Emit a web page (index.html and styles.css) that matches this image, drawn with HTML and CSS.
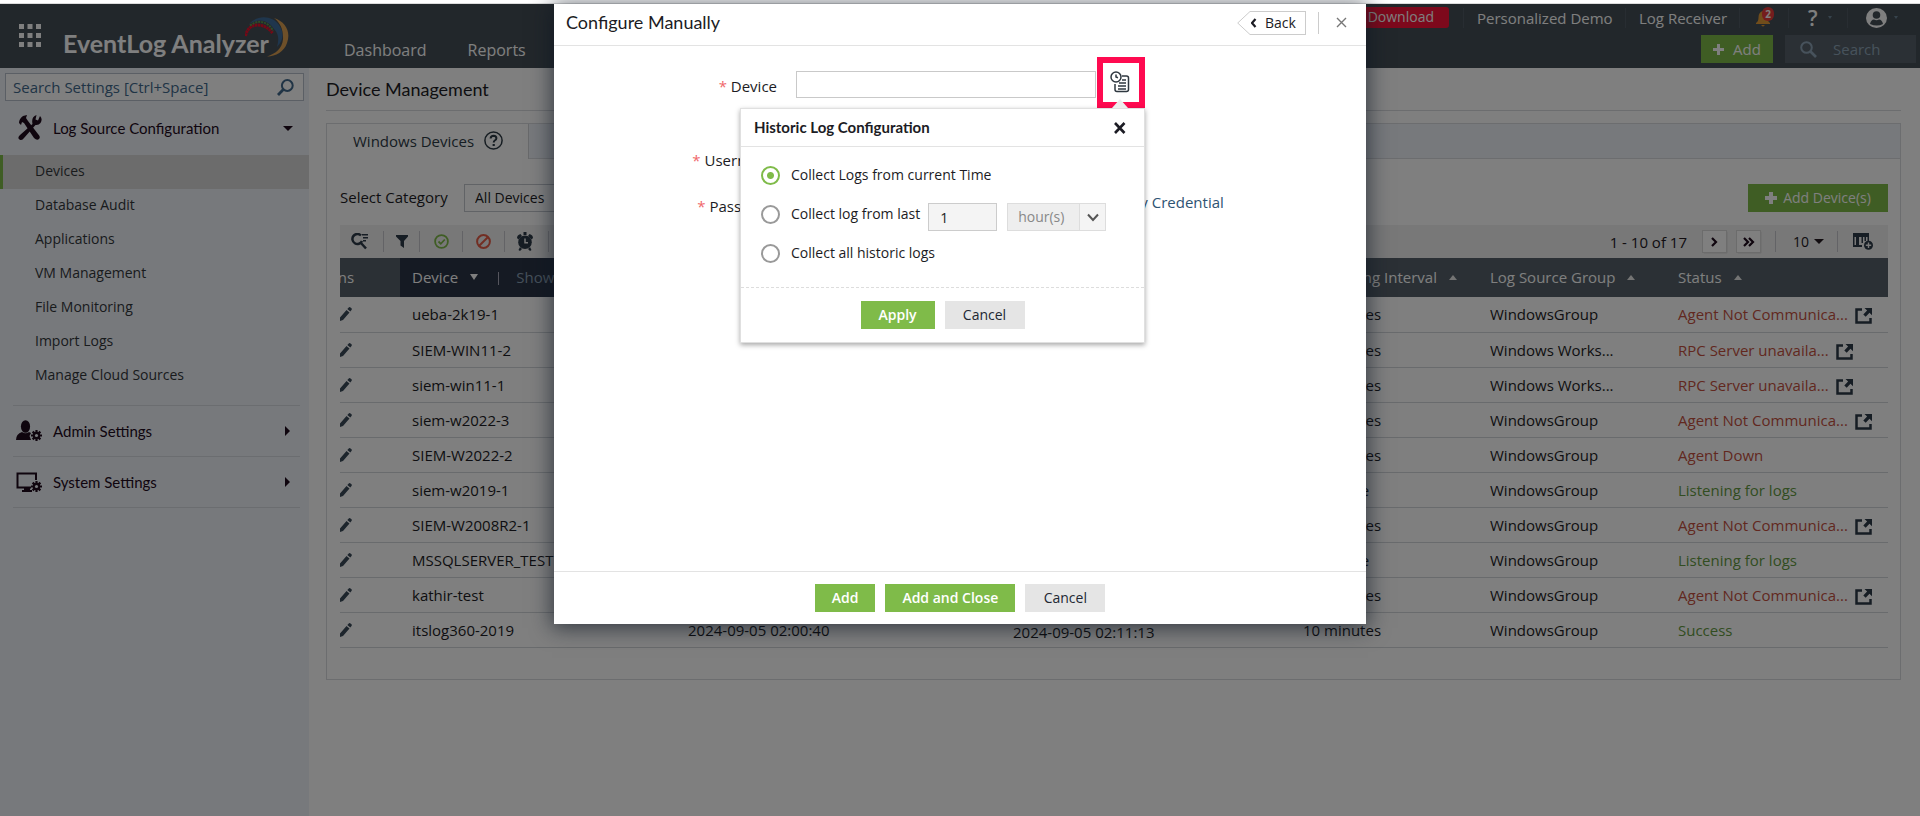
FILE: index.html
```html
<!DOCTYPE html>
<html lang="en">
<head>
<meta charset="utf-8">
<title>EventLog Analyzer</title>
<link rel="stylesheet" href="styles.css">
</head>
<body>
<svg class="sprite" aria-hidden="true">
  <symbol id="i-pencil" viewBox="0 0 12 14"><path d="M0 10.500 6.500 3l3 2.500L3 13l-3 1zM7.300 2 9 .300q.8-.5 1.500.1l1 .9q.7.8 0 1.600L10.300 4.500z"/></symbol>
  <symbol id="i-ext" viewBox="0 0 17 16"><path d="M7 1.500H1.500v13h14V10" fill="none" stroke="currentColor" stroke-width="2.500"/><path d="M9.500 0H17v7.200l-2.500-2.400-3.800 3.900-2.400-2.300 3.800-3.900z"/></symbol>
  <symbol id="i-gear" viewBox="0 0 12 12"><g stroke="currentColor" stroke-width="2.400"><path d="M6 0v12M0 6h12M1.800 1.800l8.400 8.400M10.200 1.800l-8.400 8.400"/></g><circle cx="6" cy="6" r="4"/><circle cx="6" cy="6" r="1.700" class="hole"/></symbol>
</svg>

<div class="app">
  <header class="topbar">
    <button class="apps" aria-label="Apps"><svg width="22" height="24" viewBox="0 0 22 24"><path d="M0 0h5v5H0zM8.500 0h5v5h-5zM17 0h5v5h-5zM0 9h5v5H0zM8.500 9h5v5h-5zM17 9h5v5h-5zM0 18h5v5H0zM8.500 18h5v5h-5zM17 18h5v5h-5z"/></svg></button>
    <div class="brand">EventLog Analyzer
      <svg class="arc" width="44" height="42" viewBox="0 0 44 42" fill="none">
        <path d="M0.500 20Q3 9 13 9q9 .5 14.500 8" stroke="#e8102c" stroke-width="3" stroke-dasharray="2.500 .5"/>
        <path d="M5 9.500Q14 3 22 8q4 2.500 6 7" stroke="#5d9a4d" stroke-width="2" stroke-dasharray="2 1"/>
        <path d="M4 8C13-2 28 0 34 9c5 7 5 15-2 22 2-7 2-13-3-18C23 4 14 2 4 8z" fill="#3f6c9a"/>
        <path d="M29 2c12 4 17 14 13 25-3 9-11 13-20 13.500 9-3 15-8 16-17C38.500 15 36 7 29 2z" fill="#dda052"/>
      </svg>
    </div>
    <nav class="mainnav"><a href="#">Dashboard</a><a href="#">Reports</a></nav>
    <div class="topright">
      <div class="links">
        <a class="download" href="#">Download</a>
        <a class="cell demo" href="#">Personalized Demo</a>
        <a class="cell receiver" href="#">Log Receiver</a>
        <button class="cell bell" aria-label="Alerts"><svg width="18" height="19" viewBox="0 0 18 19"><path d="M1 15q2.500-1.500 2.500-5.500Q3.500 4 8 3q4.500 1 4.500 6.500 0 4 2.500 5.500v1H1zM6 17h4l-2 1.800z" fill="#e39a36"/></svg><span class="badge">2</span></button>
        <button class="cell help" aria-label="Help">?<i class="tiny"></i></button>
        <button class="cell user" aria-label="Account"><svg width="21" height="20" viewBox="0 0 21 20"><ellipse cx="10.500" cy="10" rx="10.500" ry="10" fill="#fff"/><circle cx="10.500" cy="7" r="3.800" fill="#454f57"/><path d="M4 16q1-4.500 4-4.500 2.500 1.500 5 0 3 0 4 4.500-6 3-13 0z" fill="#454f57"/></svg><i class="tiny"></i></button>
      </div>
      <div class="actions">
        <button class="btn green"><svg width="11" height="11" viewBox="0 0 11 11"><path d="M4 0h3v4h4v3H7v4H4V7H0V4h4z"/></svg>Add</button>
        <label class="topsearch"><svg width="17" height="17" viewBox="0 0 17 17" fill="none" stroke="currentColor"><circle cx="6.500" cy="6.500" r="5.300" stroke-width="2"/><path d="m10.500 10.500 5.500 5.500" stroke-width="2.600"/></svg><input type="text" placeholder="Search" aria-label="Search"></label>
      </div>
    </div>
  </header>

  <div class="cols">
    <aside class="side">
      <label class="sidesearch"><input type="text" placeholder="Search Settings [Ctrl+Space]" aria-label="Search Settings"><svg width="17" height="17" viewBox="0 0 17 17" fill="none" stroke="currentColor"><circle cx="10.300" cy="6.500" r="5.400" stroke-width="2"/><path d="M6.300 10.500 1 16" stroke-width="2.800"/></svg></label>
      <button class="group first">
        <svg width="24" height="26" viewBox="0 0 24 26"><path d="M1 8q0-4 4-7l4-1-1 3 2 3 10 13q3 3 1 5t-5-1L6 8 4 7 3 10z"/><path d="M22 1q3 3 .500 7-2 2.500-5 2L6 23q-2 3-4.500 1.500T2 20L14.500 9Q13 2 18.500 0l-1 4.500 2.500 1z"/></svg>
        <span>Log Source Configuration</span><i class="caret down"></i>
      </button>
      <nav class="items">
        <a class="on" href="#">Devices</a><a href="#">Database Audit</a><a href="#">Applications</a><a href="#">VM Management</a><a href="#">File Monitoring</a><a href="#">Import Logs</a><a href="#">Manage Cloud Sources</a>
      </nav>
      <button class="group">
        <svg width="26" height="22" viewBox="0 0 26 22"><ellipse cx="9.500" cy="6.500" rx="4.600" ry="6.300"/><path d="M0 20q0-6 6-8 3.500 2.500 7 0l2 1-1.500 3 1.500 4z"/><use href="#i-gear" x="15" y="10" width="11" height="11"/></svg>
        <span>Admin Settings</span><i class="caret right"></i>
      </button>
      <button class="group">
        <svg width="26" height="20" viewBox="0 0 26 20"><path d="M15 15.500H1.500V1.500h18.500V8" fill="none" stroke="currentColor" stroke-width="2"/><path d="M8 16h6v2h2v2H6v-2h2z"/><use href="#i-gear" x="15" y="9" width="11" height="11"/></svg>
        <span>System Settings</span><i class="caret right"></i>
      </button>
    </aside>

    <main class="main">
      <h1>Device Management</h1>
      <section class="panel">
        <div class="tabs"><button class="tab">Windows Devices <svg width="19" height="19" viewBox="0 0 19 19"><circle cx="9.500" cy="9.500" r="8.600" fill="none" stroke="currentColor" stroke-width="1.500"/><path d="M6.600 7.500q.2-2.700 3-2.700 2.800.1 2.800 2.500 0 1.300-1.600 2.200-1.100.7-1.100 2" fill="none" stroke="currentColor" stroke-width="2"/><path d="M8.600 13h2.200v2H8.600z"/></svg></button></div>
        <div class="inner">
          <div class="filter">
            <label for="cat">Select Category</label>
            <select id="cat"><option>All Devices</option></select>
            <button class="btn green adddev"><svg width="12" height="12" viewBox="0 0 12 12"><path d="M4 0h4v4h4v4H8v4H4V8H0V4h4z"/></svg>Add Device(s)</button>
          </div>
          <div class="toolbar">
            <button class="tool t1" aria-label="Search"><svg width="17" height="17" viewBox="0 0 17 17"><path d="M10 2.500A5 5 0 1 0 11 8M9.500 9.500l5.500 6" fill="none" stroke="currentColor" stroke-width="2.500"/><path d="M11 1h6v1.500h-6zM12 4h5v1.500h-5zM12 7h3v1.500h-3z"/></svg></button>
            <button class="tool t2" aria-label="Filter"><svg width="12" height="13" viewBox="0 0 12 13"><path d="M0 0h12v1.500L8 6v7L4.500 10.500V6L0 1.500z"/></svg></button>
            <button class="tool t3 ok" aria-label="Enable"><svg width="15" height="15" viewBox="0 0 15 15" fill="none" stroke="currentColor" stroke-width="1.800"><circle cx="7.500" cy="7.500" r="6.400"/><path d="m4.500 7.500 2.300 2.300 4-4.300"/></svg></button>
            <button class="tool t4 no" aria-label="Disable"><svg width="15" height="15" viewBox="0 0 15 15" fill="none" stroke="currentColor" stroke-width="2"><circle cx="7.500" cy="7.500" r="6.400"/><path d="m3.200 11.800 8.600-8.600"/></svg></button>
            <button class="tool t5" aria-label="Schedule"><svg width="16" height="19" viewBox="0 0 16 19"><path d="M0 6q0-3 3.500-4L5 4 1.500 7.500zM16 6q0-3-3.500-4L11 4l3.500 3.500zM6.500 0h3v3h-3zM3 15l2 2-2 2-1.500-1zM13 15l-2 2 2 2 1.500-1z"/><circle cx="8" cy="10.300" r="6.800"/><path d="M8 6.500v4.300h3" fill="none" stroke="#f0f0f0" stroke-width="1.500"/></svg></button>
            <span class="range">1 - 10 of 17</span>
            <button class="pg" aria-label="Next"><svg width="7" height="10" viewBox="0 0 7 10"><path d="m1 1 4 4-4 4" fill="none" stroke="currentColor" stroke-width="2.200"/></svg></button>
            <button class="pg" aria-label="Last"><svg width="12" height="10" viewBox="0 0 12 10"><path d="m1 1 4 4-4 4M6 1l4 4-4 4" fill="none" stroke="currentColor" stroke-width="2.200"/></svg></button>
            <button class="size">10<i class="caret down"></i></button>
            <button class="colpick" aria-label="Columns"><svg width="20" height="17" viewBox="0 0 20 17"><path d="M0 0h16v8h-1.500V4H13v4h-1.500V4H10v6H8.500V4H6v8h3v2H0zM1.500 4v8H3V4z"/><circle cx="15.500" cy="12.200" r="4.500"/><path d="M15.500 9.500v5.400M12.800 12.200h5.400" stroke="#f0f0f0" stroke-width="1.400"/></svg></button>
          </div>
          <table class="grid">
            <colgroup><col class="c1"><col class="c2"><col class="c3"><col class="c4"><col class="c5"><col class="c6"><col></colgroup>
            <thead><tr><th class="act"><span>Actions</span></th><th class="sorted">Device<i class="tri dn"></i><span class="bar"></span><span class="show">Show</span></th><th></th><th></th><th>Monitoring Interval<i class="tri"></i></th><th>Log Source Group<i class="tri"></i></th><th>Status<i class="tri"></i></th></tr></thead>
            <tbody>
              <tr><td><svg class="pen"><use href="#i-pencil"/></svg></td><td>ueba-2k19-1</td><td></td><td></td><td>10 minutes</td><td>WindowsGroup</td><td class="bad">Agent Not Communica...<svg class="ext"><use href="#i-ext"/></svg></td></tr>
              <tr><td><svg class="pen"><use href="#i-pencil"/></svg></td><td>SIEM-WIN11-2</td><td></td><td></td><td>10 minutes</td><td>Windows Works...</td><td class="bad">RPC Server unavaila...<svg class="ext"><use href="#i-ext"/></svg></td></tr>
              <tr><td><svg class="pen"><use href="#i-pencil"/></svg></td><td>siem-win11-1</td><td></td><td></td><td>10 minutes</td><td>Windows Works...</td><td class="bad">RPC Server unavaila...<svg class="ext"><use href="#i-ext"/></svg></td></tr>
              <tr><td><svg class="pen"><use href="#i-pencil"/></svg></td><td>siem-w2022-3</td><td></td><td></td><td>10 minutes</td><td>WindowsGroup</td><td class="bad">Agent Not Communica...<svg class="ext"><use href="#i-ext"/></svg></td></tr>
              <tr><td><svg class="pen"><use href="#i-pencil"/></svg></td><td>SIEM-W2022-2</td><td></td><td></td><td>10 minutes</td><td>WindowsGroup</td><td class="bad">Agent Down</td></tr>
              <tr><td><svg class="pen"><use href="#i-pencil"/></svg></td><td>siem-w2019-1</td><td></td><td></td><td>Real-time</td><td>WindowsGroup</td><td class="good">Listening for logs</td></tr>
              <tr><td><svg class="pen"><use href="#i-pencil"/></svg></td><td>SIEM-W2008R2-1</td><td></td><td></td><td>10 minutes</td><td>WindowsGroup</td><td class="bad">Agent Not Communica...<svg class="ext"><use href="#i-ext"/></svg></td></tr>
              <tr><td><svg class="pen"><use href="#i-pencil"/></svg></td><td>MSSQLSERVER_TEST</td><td></td><td></td><td>Real-time</td><td>WindowsGroup</td><td class="good">Listening for logs</td></tr>
              <tr><td><svg class="pen"><use href="#i-pencil"/></svg></td><td>kathir-test</td><td></td><td></td><td>10 minutes</td><td>WindowsGroup</td><td class="bad">Agent Not Communica...<svg class="ext"><use href="#i-ext"/></svg></td></tr>
              <tr><td><svg class="pen"><use href="#i-pencil"/></svg></td><td>itslog360-2019</td><td>2024-09-05 02:00:40</td><td class="low">2024-09-05 02:11:13</td><td>10 minutes</td><td>WindowsGroup</td><td class="good">Success</td></tr>
            </tbody>
          </table>
        </div>
      </section>
    </main>
  </div>

  <div class="overlay">
    <div class="modal" role="dialog" aria-labelledby="mt">
      <div class="mhead">
        <h2 id="mt">Configure Manually</h2>
        <button class="back"><svg class="tip" width="14" height="24" viewBox="0 0 14 24"><path d="M14 .500h-1L.700 12 13 23.500h1" fill="#fff" stroke="#ccc"/></svg><svg width="7" height="10" viewBox="0 0 7 10"><path d="M5.500 1 2 5l3.500 4" fill="none" stroke="currentColor" stroke-width="2.200"/></svg>Back</button>
        <button class="mx" aria-label="Close"><svg width="11" height="11" viewBox="0 0 11 11"><path d="m1 1 9 9m0-9-9 9" stroke="currentColor" stroke-width="1.400"/></svg></button>
      </div>
      <div class="mbody">
        <div class="frow">
          <label for="dev"><b>*</b> Device</label><input id="dev" type="text">
          <div class="hist">
            <button class="histbtn" aria-label="Historic Log Configuration"><svg width="20" height="22" viewBox="0 0 20 22" fill="none" stroke="currentColor" stroke-width="1.500"><circle cx="6" cy="6" r="5"/><path d="M6 3.500V6l2 .8"/><path d="M12 5h4.500q2 0 2 2v11.500q0 2-2 2H7q-2 0-2-2V13M12 9h4M9 12h7M8 15h8M8 18h8"/></svg></button>
            <div class="pop">
              <div class="phead"><h3>Historic Log Configuration</h3><button aria-label="Close"><svg width="12" height="12" viewBox="0 0 12 12"><path d="m1 1 9.500 10m0-10L1 11" stroke="currentColor" stroke-width="2.600"/></svg></button></div>
              <div class="pbody">
                <label class="radio"><input type="radio" name="h" checked>Collect Logs from current Time</label>
                <div class="lastrow"><label class="radio"><input type="radio" name="h">Collect log from last</label><input class="num" type="text" value="1" disabled aria-label="Amount"><span class="unit"><select disabled aria-label="Unit"><option>hour(s)</option></select><svg width="12" height="9" viewBox="0 0 12 9"><path d="m1 1.500 5 5.500 5-5.500" fill="none" stroke="#555" stroke-width="2"/></svg></span></div>
                <label class="radio"><input type="radio" name="h">Collect all historic logs</label>
              </div>
              <div class="pfoot"><button class="btn green strong">Apply</button><button class="btn grey">Cancel</button></div>
            </div>
          </div>
        </div>
        <div class="frow user-row"><label for="un"><b>*</b> Username</label><input id="un" type="text"></div>
        <div class="frow pass-row"><label for="pw"><b>*</b> Password</label><input id="pw" type="password"><a href="#">Verify Credential</a></div>
      </div>
      <div class="mfoot"><button class="btn green strong">Add</button><button class="btn green strong">Add and Close</button><button class="btn grey">Cancel</button></div>
    </div>
  </div>
</div>
</body>
</html>
```
FILE: styles.css
```css
* { box-sizing: border-box; }
html, body { margin: 0; }
body { padding-top: 3px; background: #fff; font: 15px/20px "Open Sans", sans-serif; color: #1c1c24; }
button, input, select { font: inherit; color: inherit; margin: 0; padding: 0; border: 0; background: none; border-radius: 0; }
select { appearance: none; }
a { color: inherit; text-decoration: none; }
svg { flex: none; display: block; }
svg:not([fill]) { fill: currentColor; }
h1, h2, h3 { margin: 0; font-family: Lato, sans-serif; font-weight: 400; }
.sprite { position: absolute; width: 0; height: 0; }
.app { position: relative; border-top: 1px solid #dcdcdc; min-height: calc(100vh - 3px); display: flex; flex-direction: column; }

.topbar { display: flex; height: 64px; background: #454f57; color: #fff; padding-left: 19px; }
.apps { width: 22px; height: 24px; margin-top: 20px; }
.brand { position: relative; margin: 24px 0 0 22px; width: 226px; font: 700 25px/30px Lato, sans-serif; white-space: nowrap; }
.arc { position: absolute; left: 182px; top: -12px; }
.mainnav { display: flex; gap: 41px; margin: 36px 0 0 55px; font-size: 16px; }
.topright { margin-left: auto; }
.links { display: flex; justify-content: flex-end; align-items: center; height: 27px; }
.download { background: #fa1238; height: 21px; line-height: 20px; padding: 0 15px 0 20px; border-radius: 3px; margin-right: 14px; font-size: 14px; }
.cell { border-left: 1px solid #505b64; height: 20px; display: flex; align-items: center; position: relative; }
.demo { width: 162px; padding-left: 13px; }
.receiver { width: 114px; padding-left: 13px; }
.bell { width: 49px; padding-left: 15px; }
.badge { position: absolute; left: 22px; top: -1px; width: 12px; height: 14px; border-radius: 6px; background: #e83a3a; font: 700 10px/14px "Open Sans", sans-serif; text-align: center; }
.help { width: 59px; padding-left: 19px; font-size: 21px; font-weight: 600; gap: 10px; }
.user { width: 73px; padding-left: 18px; gap: 7px; }
.tiny { border: 2px solid transparent; border-top: 3px solid #6e8799; border-bottom: 0; }
.actions { display: flex; justify-content: flex-end; gap: 12px; margin: 4px 4px 0 0; }
.btn { display: inline-flex; align-items: center; justify-content: center; height: 28px; gap: 9px; font-size: 14px; white-space: nowrap; }
.green { background: #7fbb49; color: #fff; }
.grey { background: #e5e5e5; color: #222833; width: 80px; }
.strong { font-weight: 600; }
.actions .btn { width: 72px; font-size: 15px; }
.topsearch { display: flex; align-items: center; gap: 16px; width: 131px; height: 28px; background: #56616a; color: #8fa5b8; padding-left: 15px; }
.topsearch input { width: 80px; }
::placeholder { color: inherit; opacity: 1; }

.cols { display: flex; flex: 1; }
.side { width: 309px; background: #eef2f8; flex: none; color: #1f0a1c; }
.sidesearch { display: flex; align-items: center; margin: 5px 5px 0; height: 28px; border: 1px solid #b6bfca; background: #fff; padding: 0 9px 0 7px; color: #41698c; }
.sidesearch input { flex: 1; min-width: 0; }
.group { display: flex; align-items: center; width: 287px; margin-left: 13px; height: 51px; border-bottom: 1px solid #d6dae0; padding: 0 10px 0 3px; text-align: left; font: 15px/20px Lato, sans-serif; }
.group span { flex: 1; margin-left: 11px; }
.first { height: 54px; border: 0; padding: 0 7px 0 5px; }
.caret.down { border: 5px solid transparent; border-top-color: currentColor; border-bottom: 0; }
.caret.right { border: 5px solid transparent; border-left-color: currentColor; border-right: 0; }
.hole { fill: #eef2f8; }
.items { display: flex; flex-direction: column; color: #33373b; font-size: 14px; }
.items::after { content: ""; margin: 12px 9px 0 13px; border-bottom: 1px solid #d6dae0; }
.items a { height: 34px; line-height: 32px; padding-left: 35px; }
.items a.on { background: #d9d9d9; border-left: 3px solid #7fbb49; padding-left: 32px; }

.main { flex: 1; min-width: 0; padding: 0 19px 0 17px; }
h1 { font-size: 18px; line-height: 42px; border-bottom: 1px solid #d8dade; }
.panel { margin-top: 12px; border: 1px solid #d8dade; }
.tabs { display: flex; background: #eef2f8; height: 35px; border-bottom: 1px solid #d8dade; }
.tab { display: flex; align-items: center; width: 202px; height: 35px; background: #fff; border-right: 1px solid #d0d3d7; padding: 0 0 2px 26px; gap: 10px; color: #2d3a45; white-space: nowrap; }
.inner { padding: 25px 12px 31px 13px; }
.filter { display: flex; }
.filter label { width: 124px; line-height: 26px; }
.filter select { width: 180px; height: 28px; border: 1px solid #c2c6cc; padding-left: 10px; font-size: 14px; }
.adddev { margin-left: auto; width: 140px; gap: 6px; }
.toolbar { display: flex; align-items: center; height: 33px; margin-top: 13px; background: #f0f0f0; color: #2d3a48; padding-right: 15px; }
.tool { display: flex; align-items: center; height: 21px; border-right: 1px solid #c6c6cc; }
.t1 { width: 44px; padding-left: 11px; }
.t2 { width: 36px; padding-left: 12px; }
.t3 { width: 43px; padding-left: 14px; }
.t4 { width: 42px; padding-left: 13px; }
.t5 { width: 44px; padding-left: 12px; }
.ok { color: #7fbb49; }
.no { color: #e45c46; }
.range { margin-left: auto; margin-right: 16px; color: #22191f; }
.pg { width: 23px; height: 21px; margin-right: 11px; background: #fff; box-shadow: 0 0 0 1px #d8d8d8, 1px 1px 1px #aaa; display: flex; align-items: center; justify-content: center; color: #1f0a1c; }
.size { display: flex; align-items: center; gap: 5px; height: 21px; width: 63px; margin-left: 4px; padding-left: 17px; border-left: 1px solid #c6c6cc; border-right: 1px solid #c6c6cc; font-size: 14px; color: #22191f; }
.colpick { margin-left: 15px; }
.grid { width: 100%; table-layout: fixed; border-collapse: collapse; }
.c1 { width: 60px; } .c2 { width: 276px; } .c3 { width: 325px; } .c4 { width: 290px; } .c5 { width: 187px; } .c6 { width: 188px; }
.grid th { height: 39px; background: #56616a; color: #fff; font-weight: 400; text-align: left; padding: 0 0 2px 12px; white-space: nowrap; }
.grid .sorted { background: #2b3446; }
.grid .act { padding: 0 0 2px; overflow: hidden; }
.act span { margin-left: -37px; }
.tri { display: inline-block; margin-left: 12px; border: 4px solid transparent; border-bottom: 5px solid #e8e8e8; border-top: 0; vertical-align: 3px; }
.tri.dn { border-top: 6px solid #fff; border-bottom: 0; }
.bar { display: inline-block; width: 1px; height: 13px; background: #aab; margin: 0 17px 0 20px; vertical-align: -2px; }
.show { color: #8ba0b4; }
.grid td { height: 35px; border-bottom: 1px solid #d3d6da; padding: 0 0 0 12px; white-space: nowrap; }
.grid td:first-child { padding: 0; color: #3a4a59; }
.grid .low { padding-top: 4px; }
.pen { width: 12px; height: 14px; }
.ext { display: inline-block; width: 17px; height: 16px; margin-left: 7px; vertical-align: -4px; color: #2d3a48; }
.bad { color: #c4513f; }
.good { color: #649a42; }

.overlay { position: absolute; inset: 0; background: rgba(0, 0, 0, .5); display: flex; justify-content: center; align-items: flex-start; }
.modal { width: 812px; background: #fff; box-shadow: 0 2px 20px 2px rgba(12, 22, 34, .65); }
.mhead { display: flex; align-items: center; height: 42px; padding: 0 19px 4px 12px; border-bottom: 1px solid #e3e3e3; }
.mhead h2 { font-size: 18px; line-height: 24px; padding-bottom: 2px; }
.back { position: relative; display: flex; align-items: center; gap: 8px; margin-left: auto; width: 56px; height: 24px; border: 1px solid #ccc; border-left: 0; font-size: 14px; }
.tip { position: absolute; left: -13px; top: -1px; }
.mx { height: 22px; margin-left: 12px; border-left: 1px solid #ccc; padding-left: 17px; color: #777; }
.mbody { min-height: 525px; padding-top: 25px; }
.frow { display: flex; align-items: center; height: 27px; }
.frow > label { width: 223px; text-align: right; margin-right: 19px; padding-top: 3px; white-space: nowrap; }
.frow b { color: #f0676a; font-weight: 400; }
.frow > input { width: 300px; height: 27px; border: 1px solid #c9c9c9; padding: 0 8px; }
.frow > a { margin-left: 12px; color: #2e5373; padding-bottom: 6px; }
.user-row { margin-top: 47px; }
.pass-row { margin-top: 19px; }
.hist { position: relative; align-self: flex-start; margin: -14px 0 0 1px; }
.histbtn { display: flex; justify-content: center; align-items: center; width: 48px; height: 51px; border: 6px solid #ff0a50; color: #2f3840; padding: 0 3px 2px 0; }
.pop { position: absolute; right: 0; top: 51px; width: 405px; background: #fff; border: 1px solid #e0e0e0; box-shadow: 0 2px 5px rgba(0, 0, 0, .35); }
.pop::before { content: ""; position: absolute; right: 16px; top: -10px; border: 8px solid transparent; border-bottom: 9px solid #eee; border-top: 0; }
.phead { display: flex; align-items: center; justify-content: space-between; height: 38px; padding: 0 18px 0 13px; border-bottom: 1px solid #e3e3e3; }
.phead h3 { font-size: 15px; line-height: 20px; font-weight: 700; padding-bottom: 2px; }
.pbody { height: 140px; padding: 18px 20px 0; display: flex; flex-direction: column; gap: 19px; }
.radio { display: flex; align-items: center; gap: 11px; height: 20px; font-size: 14px; white-space: nowrap; }
.radio input { appearance: none; width: 19px; height: 19px; border: 2px solid #999; border-radius: 50%; }
.radio input:checked { border-color: #7fbb49; background: radial-gradient(circle, #7fbb49 3px, #fff 4px); }
.lastrow { display: flex; align-items: center; height: 20px; }
.num { width: 69px; height: 28px; margin: 6px 0 0 8px; border: 1px solid #ccc; background: #f4f4f4; padding-left: 11px; font-size: 14px; }
.unit { display: flex; align-items: center; width: 99px; height: 28px; margin: 6px 0 0 10px; border: 1px solid #ddd; background: #f4f4f4; }
.unit select { width: 72px; height: 26px; background: #eee; border-right: 1px solid #ddd; padding-left: 10px; font-size: 14px; color: #888; opacity: 1; margin-right: 7px; }
.pfoot { display: flex; justify-content: center; gap: 10px; padding: 13px 0; border-top: 1px dashed #ddd; }
.pfoot .strong { width: 74px; }
.mfoot { display: flex; justify-content: center; gap: 10px; padding: 12px; border-top: 1px solid #e3e3e3; }
.mfoot .strong { padding: 0 17px; }
```
